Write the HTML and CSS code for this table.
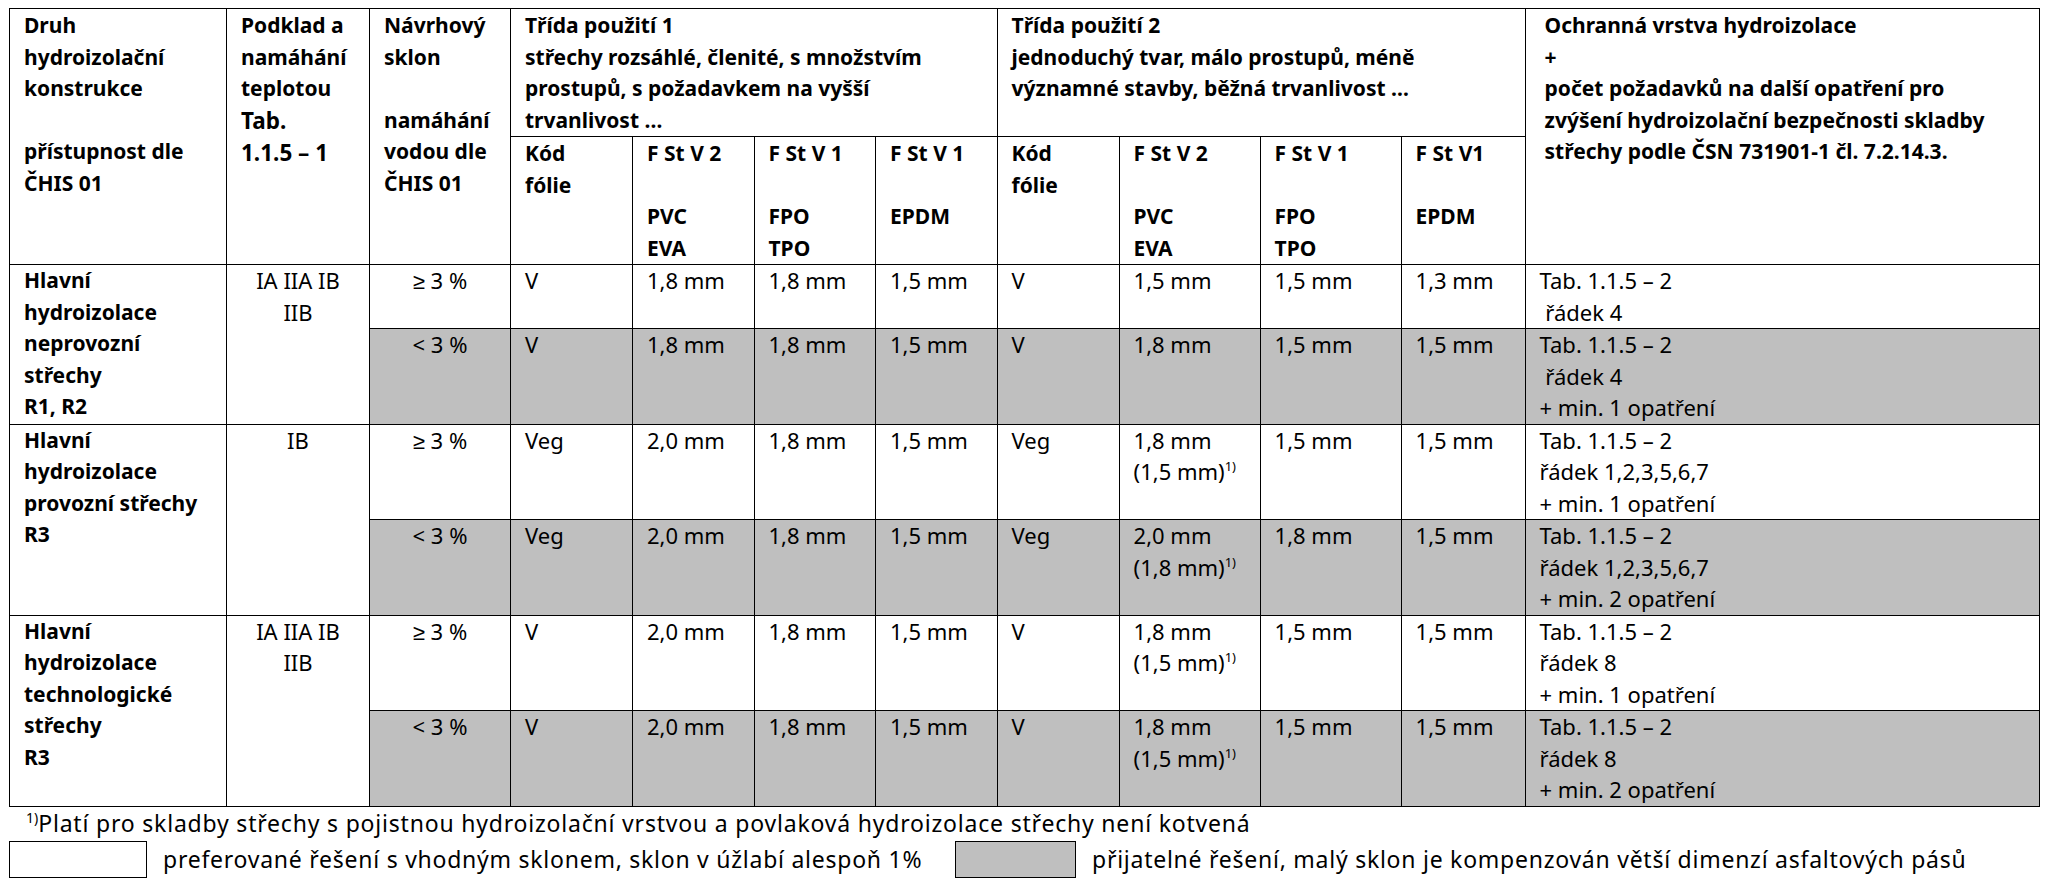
FILE: index.html
```html
<!DOCTYPE html>
<html lang="cs">
<head>
<meta charset="utf-8">
<title>Hydroizolace – fólie</title>
<link rel="stylesheet" href="styles.css">
</head>
<body>
<table class="spec">
  <colgroup>
    <col class="col-druh">
    <col class="col-podklad">
    <col class="col-sklon">
    <col class="col-kod">
    <col class="col-f">
    <col class="col-f">
    <col class="col-f">
    <col class="col-kod">
    <col class="col-f2">
    <col class="col-f2">
    <col class="col-f3">
    <col class="col-ochr">
  </colgroup>
  <thead>
    <tr class="head-top">
      <th rowspan="2">Druh<br>hydroizolační<br>konstrukce<br><br>přístupnost dle<br>ČHIS 01</th>
      <th rowspan="2">Podklad a<br>namáhání<br>teplotou<br><span class="big">Tab.<br>1.1.5 – 1</span></th>
      <th rowspan="2">Návrhový<br>sklon<br><br>namáhání<br>vodou dle<br>ČHIS 01</th>
      <th colspan="4" class="nowrap">Třída použití 1<br>střechy rozsáhlé, členité, s množstvím<br>prostupů, s požadavkem na vyšší<br>trvanlivost …</th>
      <th colspan="4" class="nowrap">Třída použití 2<br>jednoduchý tvar, málo prostupů, méně<br>významné stavby, běžná trvanlivost …</th>
      <th rowspan="2" class="nowrap ochr">Ochranná vrstva hydroizolace<br>+<br>počet požadavků na další opatření pro<br>zvýšení hydroizolační bezpečnosti skladby<br>střechy podle ČSN 731901-1 čl. 7.2.14.3.</th>
    </tr>
    <tr class="head-sub">
      <th>Kód<br>fólie</th>
      <th>F St V 2<br><br>PVC<br>EVA</th>
      <th>F St V 1<br><br>FPO<br>TPO</th>
      <th>F St V 1<br><br>EPDM</th>
      <th>Kód<br>fólie</th>
      <th>F St V 2<br><br>PVC<br>EVA</th>
      <th>F St V 1<br><br>FPO<br>TPO</th>
      <th>F St V1<br><br>EPDM</th>
    </tr>
  </thead>
  <tbody>
    <tr class="r-two">
      <th rowspan="2">Hlavní<br>hydroizolace<br>neprovozní<br>střechy<br>R1, R2</th>
      <td rowspan="2" class="center">IA IIA IB<br>IIB</td>
      <td class="center">≥ 3 %</td>
      <td>V</td>
      <td>1,8 mm</td>
      <td>1,8 mm</td>
      <td>1,5 mm</td>
      <td>V</td>
      <td>1,5 mm</td>
      <td>1,5 mm</td>
      <td>1,3 mm</td>
      <td>Tab. 1.1.5 – 2<br>&nbsp;řádek 4</td>
    </tr>
    <tr class="r-three shade">
      <td class="center">&lt; 3 %</td>
      <td>V</td>
      <td>1,8 mm</td>
      <td>1,8 mm</td>
      <td>1,5 mm</td>
      <td>V</td>
      <td>1,8 mm</td>
      <td>1,5 mm</td>
      <td>1,5 mm</td>
      <td>Tab. 1.1.5 – 2<br>&nbsp;řádek 4<br>+ min. 1 opatření</td>
    </tr>
    <tr class="r-three">
      <th rowspan="2">Hlavní<br>hydroizolace<br>provozní střechy<br>R3</th>
      <td rowspan="2" class="center">IB</td>
      <td class="center">≥ 3 %</td>
      <td>Veg</td>
      <td>2,0 mm</td>
      <td>1,8 mm</td>
      <td>1,5 mm</td>
      <td>Veg</td>
      <td>1,8 mm<br>(1,5 mm)<sup>1)</sup></td>
      <td>1,5 mm</td>
      <td>1,5 mm</td>
      <td>Tab. 1.1.5 – 2<br>řádek 1,2,3,5,6,7<br>+ min. 1 opatření</td>
    </tr>
    <tr class="r-three shade">
      <td class="center">&lt; 3 %</td>
      <td>Veg</td>
      <td>2,0 mm</td>
      <td>1,8 mm</td>
      <td>1,5 mm</td>
      <td>Veg</td>
      <td>2,0 mm<br>(1,8 mm)<sup>1)</sup></td>
      <td>1,8 mm</td>
      <td>1,5 mm</td>
      <td>Tab. 1.1.5 – 2<br>řádek 1,2,3,5,6,7<br>+ min. 2 opatření</td>
    </tr>
    <tr class="r-three">
      <th rowspan="2">Hlavní<br>hydroizolace<br>technologické<br>střechy<br>R3</th>
      <td rowspan="2" class="center">IA IIA IB<br>IIB</td>
      <td class="center">≥ 3 %</td>
      <td>V</td>
      <td>2,0 mm</td>
      <td>1,8 mm</td>
      <td>1,5 mm</td>
      <td>V</td>
      <td>1,8 mm<br>(1,5 mm)<sup>1)</sup></td>
      <td>1,5 mm</td>
      <td>1,5 mm</td>
      <td>Tab. 1.1.5 – 2<br>řádek 8<br>+ min. 1 opatření</td>
    </tr>
    <tr class="r-three shade">
      <td class="center">&lt; 3 %</td>
      <td>V</td>
      <td>2,0 mm</td>
      <td>1,8 mm</td>
      <td>1,5 mm</td>
      <td>V</td>
      <td>1,8 mm<br>(1,5 mm)<sup>1)</sup></td>
      <td>1,5 mm</td>
      <td>1,5 mm</td>
      <td>Tab. 1.1.5 – 2<br>řádek 8<br>+ min. 2 opatření</td>
    </tr>
  </tbody>
</table>
<p class="note"><sup>1)</sup>Platí pro skladby střechy s pojistnou hydroizolační vrstvou a povlaková hydroizolace střechy není kotvená</p>
<div class="legend">
  <div class="legend-item first">
    <span class="swatch"></span>
    <span class="legend-text">preferované řešení s vhodným sklonem, sklon v úžlabí alespoň 1%</span>
  </div>
  <div class="legend-item">
    <span class="swatch grey"></span>
    <span class="legend-text">přijatelné řešení, malý sklon je kompenzován větší dimenzí asfaltových pásů</span>
  </div>
</div>
</body>
</html>
```

FILE: styles.css
```css
html, body {
  background: #ffffff;
}

body {
  margin: 8px 0 0 9px;
  font-family: "Noto Sans", sans-serif;
  color: #000000;
}

.spec {
  border-collapse: collapse;
  table-layout: fixed;
  width: 2029px;
}

.col-druh { width: 217px; }
.col-podklad { width: 143px; }
.col-sklon { width: 141px; }
.col-kod { width: 122px; }
.col-f { width: 121.5px; }
.col-f2 { width: 141px; }
.col-f3 { width: 124px; }
.col-ochr { width: 514px; }

.spec th,
.spec td {
  border: 1px solid #000000;
  padding: 1px 14px 0;
  vertical-align: top;
  text-align: left;
  line-height: 31.5px;
}

.spec tbody th,
.spec tbody td {
  padding-top: 0;
}

.spec th {
  font-weight: 700;
  font-size: 21px;
}

.spec td {
  font-weight: 400;
  font-size: 22px;
}

.spec .center {
  text-align: center;
}

.nowrap {
  white-space: nowrap;
}

.spec th.ochr {
  padding-left: 19px;
}

.big {
  font-size: 22.5px;
}

.head-top { height: 127px; }
.head-sub { height: 128px; }
.r-two { height: 63px; }
.r-three { height: 95px; }

.shade td {
  background: #bfbfbf;
}

sup {
  font-size: 13px;
  line-height: 0;
  vertical-align: 9px;
}

.note {
  margin: 0;
  padding-left: 17px;
  font-size: 23px;
  letter-spacing: 0.8px;
  line-height: 32px;
}

.note sup {
  letter-spacing: 0;
  font-size: 14px;
}

.legend {
  display: flex;
  align-items: center;
  margin-top: 2px;
  font-size: 23px;
  letter-spacing: 0.75px;
}

.legend-item {
  display: flex;
  align-items: center;
  gap: 16px;
}

.legend-item.first {
  width: 946px;
}

.swatch {
  display: block;
  width: 136px;
  height: 35px;
  border: 1px solid #000000;
  background: #ffffff;
}

.swatch.grey {
  width: 119px;
  background: #bfbfbf;
}
```
